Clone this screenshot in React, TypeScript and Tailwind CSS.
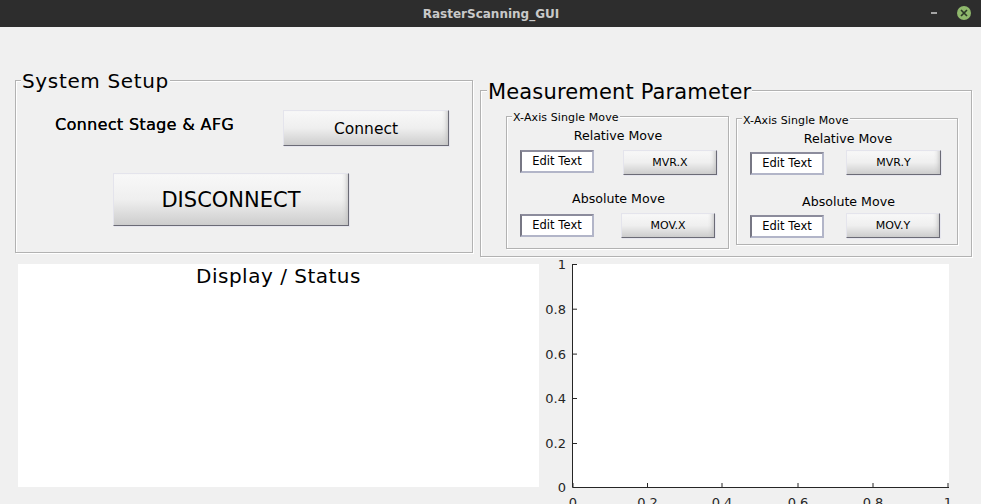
export default function App() {
  const btn =
    "flex items-center justify-center border-t border-l border-t-[#e4e4ec] border-l-[#e4e4ec] border-r-[1.5px] border-b-[1.5px] border-r-[#6b6b76] border-b-[#6b6b76] bg-gradient-to-b from-[#f8f8f8] via-[#efefef] to-[#cdcdcd] shadow-[inset_-5px_0_5px_-4px_#bdbdbd,1px_1px_0_#e6e6ee] text-black";
  const edit =
    "flex items-center justify-center w-[74px] h-[23px] pt-[1px] bg-white border-2 border-[#b2b5c8] border-l-[#777784] border-t-[#8c8c9c] text-[11.5px] tracking-[0.05px] text-black";
  const panel = "relative border border-[#b2b2b2] shadow-[inset_1px_1px_0_#ffffff,1px_1px_0_#ffffff]";
  const smallTitle = "h-[18px] leading-[18px] text-center text-[12.6px] text-black";
  const xTicks = [
    [33, "0"],
    [107.5, "0.2"],
    [182, "0.4"],
    [258, "0.6"],
    [333, "0.8"],
    [408, "1"],
  ] as const;
  const yTicks = [
    [0, "1"],
    [44.7, "0.8"],
    [89.6, "0.6"],
    [134, "0.4"],
    [179, "0.2"],
    [223, "0"],
  ] as const;

  return (
    <div className="w-[981px] h-[504px] overflow-hidden flex flex-col bg-[#f0f0f0] font-['DejaVu_Sans',sans-serif]">
      <div className="relative h-[27px] shrink-0 bg-[#2d2d2d] flex items-center justify-center">
        <span className="ml-[1px] text-[12px] font-bold text-[#c9c9c9]">RasterScanning_GUI</span>
        <div className="absolute left-[931px] top-[12px] w-[6px] h-[2px] bg-[#a5a5a5]" />
        <div className="absolute left-[957px] top-[6px] w-[14px] h-[14px] rounded-full bg-[#8fb86c] flex items-center justify-center">
          <svg width="8" height="8" viewBox="0 0 8 8">
            <path d="M1 1L7 7M7 1L1 7" stroke="#2d3a28" strokeWidth="1.7" />
          </svg>
        </div>
      </div>

      <div className="flex items-start h-[237px] shrink-0">
        <div className={`${panel} ml-[15px] mt-[53px] w-[458px] h-[173px]`}>
          <div className="absolute left-[5px] top-[-12px] px-[1px] bg-[#f0f0f0] h-[24px] leading-[24px] text-[20px] text-black tracking-[0.65px]">
            System Setup
          </div>
          <div className="flex items-start mt-[29px]">
            <span className="ml-[39px] mt-[5px] w-[228px] h-[20px] leading-[20px] text-[16px] tracking-[0.33px] text-black [text-shadow:0.2px_0_0_#000]">
              Connect Stage &amp; AFG
            </span>
            <div className={`${btn} pt-[3px] w-[166px] h-[36px] text-[15.5px] text-[#222]`}>Connect</div>
          </div>
          <div className={`${btn} pt-[3px] ml-[97px] mt-[27px] w-[236px] h-[53px] text-[21px]`}>DISCONNECT</div>
        </div>

        <div className={`${panel} ml-[7px] mt-[63px] w-[492px] h-[167px] flex items-start`}>
          <div className="absolute left-[6px] top-[-12px] px-[1px] bg-[#f0f0f0] h-[26px] leading-[26px] text-[21px] text-black tracking-[0.15px]">
            Measurement Parameter
          </div>

          <div className={`${panel} ml-[25px] mt-[25px] w-[223px] h-[133px]`}>
            <div className="absolute left-[5px] top-[-6px] px-[1px] bg-[#f0f0f0] h-[14px] leading-[14px] text-[11px] tracking-[0.1px] text-black">
              X-Axis Single Move
            </div>
            <div className={`${smallTitle} mt-[10px] ml-[1px]`}>Relative Move</div>
            <div className="flex items-start ml-[13px] mt-[5px]">
              <div className={edit}>Edit Text</div>
              <div className={`${btn} pt-[2px] ml-[29px] w-[94px] h-[25px] text-[11px]`}>MVR.X</div>
            </div>
            <div className={`${smallTitle} mt-[15px] ml-[2px]`}>Absolute Move</div>
            <div className="flex items-start ml-[13px] mt-[5px]">
              <div className={`${edit} mt-[1px]`}>Edit Text</div>
              <div className={`${btn} pt-[2px] ml-[27px] w-[94px] h-[25px] text-[11px]`}>MOV.X</div>
            </div>
          </div>

          <div className={`${panel} ml-[7px] mt-[27px] w-[222px] h-[127px]`}>
            <div className="absolute left-[5px] top-[-5px] px-[1px] bg-[#f0f0f0] h-[14px] leading-[14px] text-[11px] tracking-[0.1px] text-black">
              X-Axis Single Move
            </div>
            <div className={`${smallTitle} mt-[11px] ml-[2px]`}>Relative Move</div>
            <div className="flex items-start ml-[13px] mt-[2px]">
              <div className={`${edit} mt-[2px]`}>Edit Text</div>
              <div className={`${btn} pt-[2px] ml-[22px] w-[95px] h-[25px] text-[11px]`}>MVR.Y</div>
            </div>
            <div className={`${smallTitle} mt-[18px] ml-[3px]`}>Absolute Move</div>
            <div className="flex items-start ml-[13px] mt-[2px]">
              <div className={`${edit} mt-[2px]`}>Edit Text</div>
              <div className={`${btn} pt-[2px] ml-[22px] w-[94px] h-[25px] text-[11px]`}>MOV.Y</div>
            </div>
          </div>
        </div>
      </div>

      <div className="flex items-start">
        <div className="ml-[18px] mr-[1px] w-[521px] h-[223px] bg-white text-center text-[20px] leading-[24px] text-black tracking-[0.5px]">
          Display / Status
        </div>
        <svg width="441" height="240" className="overflow-visible shrink-0 block" fontFamily="'DejaVu Sans', sans-serif">
          <rect x="33" y="0" width="376" height="223" fill="#ffffff" />
          <path d="M32.5 0V223.5H409" fill="none" stroke="#262626" strokeWidth="1" />
          {yTicks.map(([y, t]) => (
            <g key={t}>
              <path d={`M33 ${y + 0.5}H37`} stroke="#262626" strokeWidth="1" />
              <text x="26" y={y + 5} textAnchor="end" fontSize="13" fill="#262626">
                {t}
              </text>
            </g>
          ))}
          {xTicks.map(([x, t]) => (
            <g key={t}>
              <path d={`M${x} 223V219`} stroke="#262626" strokeWidth="1" />
              <text x={x} y="243" textAnchor="middle" fontSize="13" fill="#262626">
                {t}
              </text>
            </g>
          ))}
        </svg>
      </div>
    </div>
  );
}
